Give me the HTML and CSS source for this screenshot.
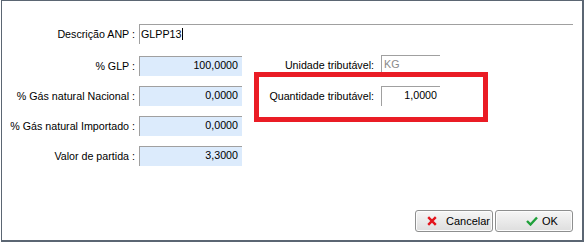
FILE: index.html
```html
<!DOCTYPE html>
<html lang="pt">
<head>
<meta charset="utf-8">
<title>Dados ANP</title>
<link rel="stylesheet" href="styles.css">
</head>
<body>
<div class="window">
  <div class="desc-row">
    <span class="label">Descrição ANP :</span>
    <div class="field field-desc"><span class="val">GLPP13</span><span class="caret"></span></div>
  </div>
  <div class="cols">
    <div class="grid grid-left">
      <span class="label">% GLP :</span>
      <div class="field field-num">100,0000</div>
      <span class="label">% Gás natural Nacional :</span>
      <div class="field field-num">0,0000</div>
      <span class="label">% Gás natural Importado :</span>
      <div class="field field-num">0,0000</div>
      <span class="label">Valor de partida :</span>
      <div class="field field-num">3,3000</div>
    </div>
    <div class="grid grid-right">
      <span class="label">Unidade tributável:</span>
      <div class="field field-white field-unit">KG</div>
      <span class="label">Quantidade tributável:</span>
      <div class="field field-white field-qty">1,0000</div>
    </div>
  </div>
  <div class="highlight"></div>
  <div class="footer">
    <button class="btn btn-cancel" type="button">
      <svg class="icon" width="10" height="10" viewBox="0 0 10 10"><path d="M1.2 1.2 L8.8 8.8 M8.8 1.2 L1.2 8.8" stroke="#e3141c" stroke-width="2.4" fill="none"/></svg>
      <span>Cancelar</span>
    </button>
    <button class="btn btn-ok" type="button">
      <svg class="icon" width="12" height="10" viewBox="0 0 12 10"><path d="M1 5 L4.5 8.5 L11 1.5" stroke="#1fa03a" stroke-width="2.4" fill="none"/></svg>
      <span>OK</span>
    </button>
  </div>
</div>
</body>
</html>
```

FILE: styles.css
```css
* { box-sizing: border-box; }
html, body { margin: 0; padding: 0; background: #ffffff; }
body {
  width: 585px;
  height: 243px;
  font-family: "Liberation Sans", Arial, sans-serif;
  font-size: 10.7px;
  color: #000;
  overflow: hidden;
}
.window {
  position: relative;
  margin-left: 1px;
  width: 583px;
  height: 242px;
  border-style: solid;
  border-color: #5b6673;
  border-width: 1px 2px 2px 1px;
  display: flex;
  flex-direction: column;
}
.desc-row {
  display: flex;
  align-items: center;
  margin-top: 23px;
}
.desc-row .label {
  width: 133px;
  text-align: right;
}
.field {
  height: 20px;
  border-top: 1px solid #a0a0a0;
  border-left: 1px solid #a0a0a0;
  line-height: 16px;
  padding: 0 3px;
}
.field-desc {
  margin-left: 4px;
  width: 434px;
  background: #fff;
  display: flex;
  align-items: center;
  padding-left: 1px;
  padding-bottom: 2px;
}
.caret {
  display: inline-block;
  width: 1px;
  height: 12px;
  background: #000;
  margin-left: 1px;
}
.cols {
  display: flex;
  margin-top: 12px;
}
.grid {
  display: grid;
  align-items: center;
}
.grid .label { text-align: right; }
.grid-left {
  grid-template-columns: 133px 103px;
  column-gap: 4px;
  row-gap: 10px;
}
.field-num {
  background: #dcebfc;
  text-align: right;
  padding-right: 4px;
}
.grid-right {
  margin-left: 4px;
  margin-top: -1px;
  grid-template-columns: 128px 59px;
  column-gap: 7px;
  row-gap: 11px;
  align-self: flex-start;
}
.field-white {
  background: #fff;
}
.field-unit {
  color: #8a8a8a;
  padding-left: 2px;
}
.field-qty {
  text-align: right;
  padding-right: 3px;
}
.highlight {
  position: absolute;
  left: 252px;
  top: 71px;
  width: 234px;
  height: 50px;
  border: 5px solid #ea1c25;
}
.footer {
  margin-top: auto;
  margin-bottom: 8px;
  margin-right: 9px;
  display: flex;
  justify-content: flex-end;
  gap: 2px;
}
.btn {
  width: 78px;
  height: 22px;
  border: 1px solid #8e8f8f;
  border-radius: 3px;
  background: linear-gradient(#f6f6f6, #dedede);
  box-shadow: inset 0 0 0 1px #fcfcfc;
  font-family: "Liberation Sans", Arial, sans-serif;
  font-size: 11px;
  color: #000;
  display: flex;
  align-items: center;
  justify-content: flex-start;
  padding: 0;
}
.btn-cancel {
  padding-left: 11px;
  gap: 9px;
}
.btn-ok {
  padding-left: 30px;
  gap: 4px;
}
.icon { display: block; }
```
